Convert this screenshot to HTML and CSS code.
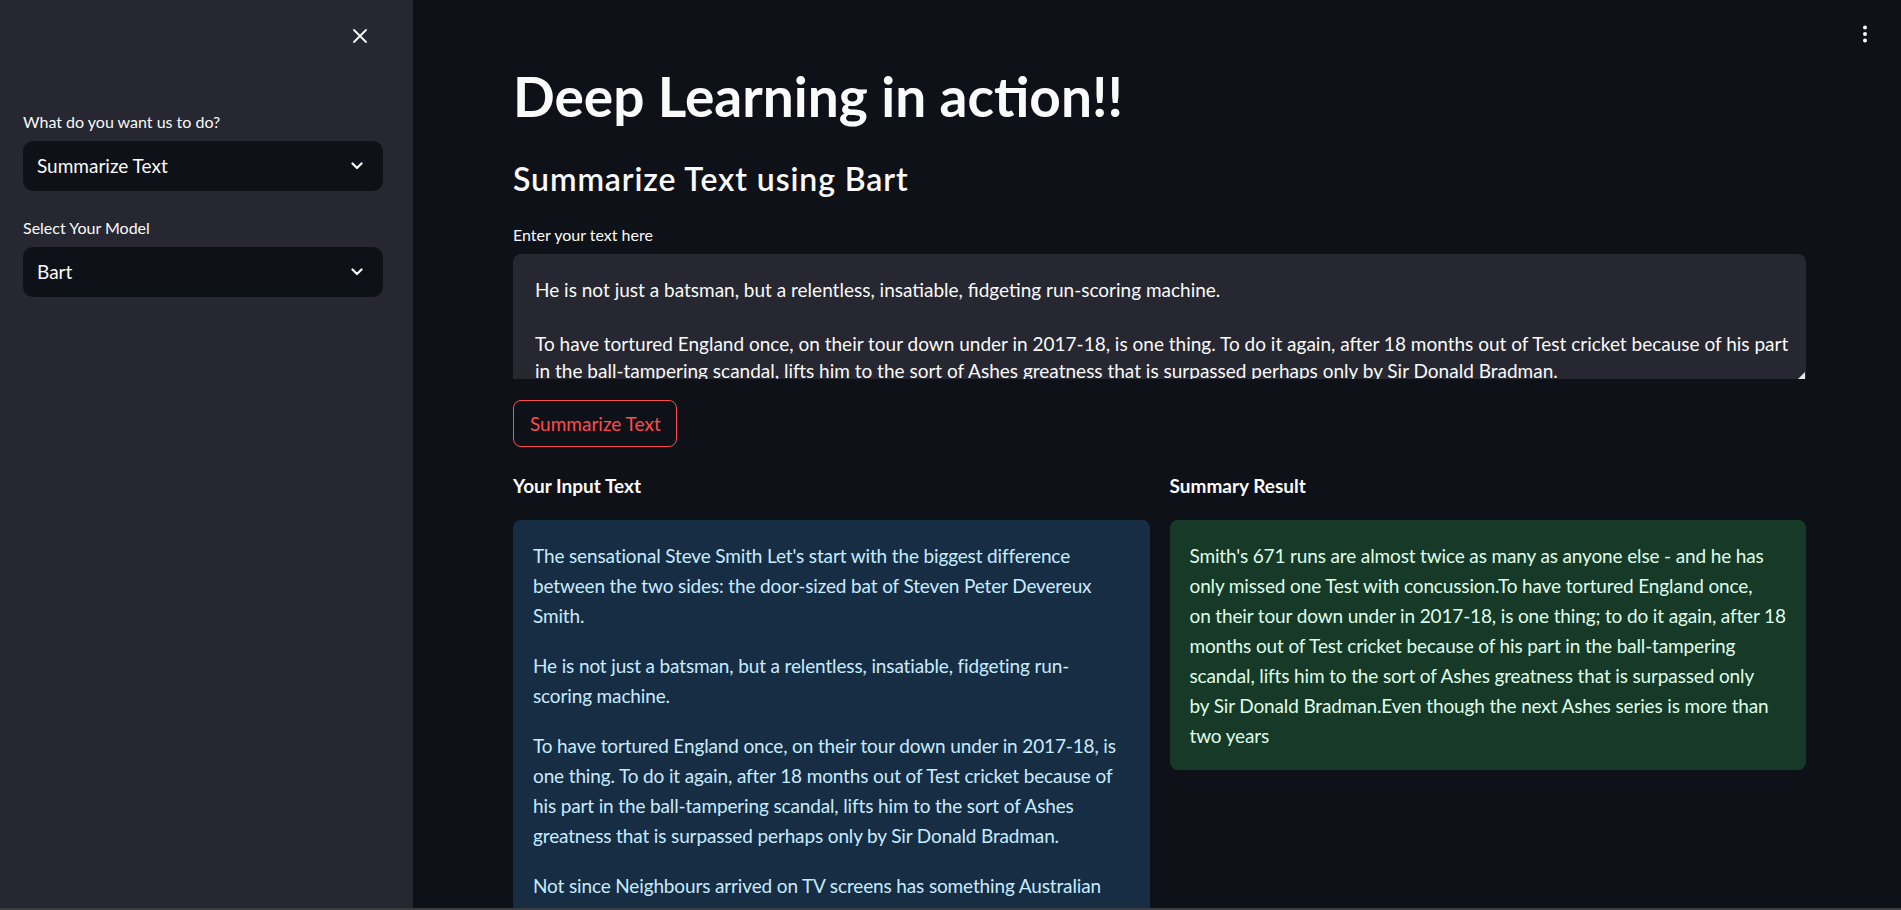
FILE: index.html
```html
<!DOCTYPE html>
<html lang="en">
<head>
<meta charset="utf-8">
<title>Deep Learning in action!!</title>
<link rel="stylesheet" href="styles.css">
</head>
<body>
<div class="app">
  <aside class="sidebar">
    <div class="sb-top">
      <button class="close-btn" aria-label="Close sidebar">
        <svg width="14" height="14" viewBox="0 0 14 14"><path d="M1 1 L13 13 M13 1 L1 13" stroke="#fafafa" stroke-width="1.8" stroke-linecap="round"/></svg>
      </button>
    </div>
    <div class="field">
      <label class="sb-label">What do you want us to do?</label>
      <div class="select">
        <span>Summarize Text</span>
        <svg class="chev" width="12" height="8" viewBox="0 0 12 8"><path d="M1.5 1.5 L6 6 L10.5 1.5" fill="none" stroke="#fafafa" stroke-width="2.2" stroke-linecap="round" stroke-linejoin="round"/></svg>
      </div>
    </div>
    <div class="field field-2">
      <label class="sb-label">Select Your Model</label>
      <div class="select">
        <span>Bart</span>
        <svg class="chev" width="12" height="8" viewBox="0 0 12 8"><path d="M1.5 1.5 L6 6 L10.5 1.5" fill="none" stroke="#fafafa" stroke-width="2.2" stroke-linecap="round" stroke-linejoin="round"/></svg>
      </div>
    </div>
  </aside>
  <main class="main">
    <button class="menu-btn" aria-label="Main menu">
      <svg width="6" height="18" viewBox="0 0 6 18"><circle cx="3" cy="2.5" r="2" fill="#fafafa"/><circle cx="3" cy="9" r="2" fill="#fafafa"/><circle cx="3" cy="15.5" r="2" fill="#fafafa"/></svg>
    </button>
    <h1 class="title">Deep Learning in action!!</h1>
    <h2 class="subtitle">Summarize Text using Bart</h2>
    <label class="label">Enter your text here</label>
    <div class="textarea">
      <div class="ta-line">He is not just a batsman, but a relentless, insatiable, fidgeting run-scoring machine.</div>
      <div class="ta-line">&nbsp;</div>
      <div class="ta-line">To have tortured England once, on their tour down under in 2017-18, is one thing. To do it again, after 18 months out of Test cricket because of his part</div>
      <div class="ta-line">in the ball-tampering scandal, lifts him to the sort of Ashes greatness that is surpassed perhaps only by Sir Donald Bradman.</div>
      <span class="resize-handle"></span>
    </div>
    <div class="btn-row">
      <button class="btn">Summarize Text</button>
    </div>
    <div class="cols">
      <section class="col">
        <h3 class="col-title">Your Input Text</h3>
        <div class="box box-info">
          <p>The sensational Steve Smith Let's start with the biggest difference<br>between the two sides: the door-sized bat of Steven Peter Devereux<br>Smith.</p>
          <p>He is not just a batsman, but a relentless, insatiable, fidgeting run-<br>scoring machine.</p>
          <p>To have tortured England once, on their tour down under in 2017-18, is<br>one thing. To do it again, after 18 months out of Test cricket because of<br>his part in the ball-tampering scandal, lifts him to the sort of Ashes<br>greatness that is surpassed perhaps only by Sir Donald Bradman.</p>
          <p>Not since Neighbours arrived on TV screens has something Australian<br>been so compulsively watchable in the United Kingdom.</p>
        </div>
      </section>
      <section class="col">
        <h3 class="col-title">Summary Result</h3>
        <div class="box box-success">
          <p>Smith's 671 runs are almost twice as many as anyone else - and he has<br>only missed one Test with concussion.To have tortured England once,<br>on their tour down under in 2017-18, is one thing; to do it again, after 18<br>months out of Test cricket because of his part in the ball-tampering<br>scandal, lifts him to the sort of Ashes greatness that is surpassed only<br>by Sir Donald Bradman.Even though the next Ashes series is more than<br>two years</p>
        </div>
      </section>
    </div>
  </main>
</div>
<div class="bottom-line"></div>
</body>
</html>
```
FILE: styles.css
```css
* { box-sizing: border-box; }
html, body { margin: 0; padding: 0; }
body {
  background: #0e1117;
  color: #fafafa;
  font-family: Lato, "Noto Sans", sans-serif;
  width: 1901px;
  height: 910px;
  overflow: hidden;
}
.app {
  display: flex;
  height: 908px;
  overflow: hidden;
}
.bottom-line {
  height: 2px;
  background: #3c3d40;
}
.sidebar {
  width: 413px;
  flex: none;
  background: #262730;
  padding: 0 30px 0 23px;
}
.sb-top {
  height: 72px;
  display: flex;
  align-items: center;
  justify-content: flex-end;
  padding-right: 16px;
}
.close-btn, .menu-btn {
  background: none;
  border: 0;
  padding: 0;
  display: flex;
  cursor: pointer;
}
.field { margin-top: 39px; }
.field-2 { margin-top: 26px; }
.sb-label, .label {
  display: block;
  font-size: 16px;
  line-height: 22px;
  height: 22px;
  color: #fafafa;
}
.select {
  margin-top: 8px;
  height: 50px;
  border-radius: 10px;
  background: #0e1117;
  display: flex;
  align-items: center;
  justify-content: space-between;
  padding: 0 20px 0 14px;
  font-size: 19px;
  line-height: 50px;
}
.main {
  flex: 1;
  position: relative;
  padding: 63px 95px 0 100px;
  display: flex;
  flex-direction: column;
  min-width: 0;
}
.main > * { flex-shrink: 0; }
.menu-btn {
  position: absolute;
  top: 25px;
  right: 33px;
}
.title {
  margin: 0;
  font-size: 55px;
  line-height: 66px;
  font-weight: 700;
  white-space: nowrap;
}
.subtitle {
  margin: 32px 0 0;
  font-size: 32px;
  line-height: 36px;
  font-weight: 600;
  letter-spacing: 0.9px;
}
.label { margin-top: 27px; }
.textarea {
  position: relative;
  margin-top: 8px;
  height: 125px;
  background: #262730;
  border-radius: 8px 8px 0 0;
  padding: 22px 22px 0;
  overflow: hidden;
  font-size: 19px;
  line-height: 27px;
}
.ta-line { white-space: nowrap; }
.resize-handle {
  position: absolute;
  right: 1px;
  bottom: 0;
  width: 0;
  height: 0;
  border-left: 7px solid transparent;
  border-bottom: 7px solid #e6e6e6;
}
.btn-row { margin-top: 21px; display: flex; }
.btn {
  height: 47px;
  padding: 0 15px 0 16px;
  background: transparent;
  border: 1px solid #ff4b4b;
  border-radius: 8px;
  color: #ff4b4b;
  font-family: inherit;
  font-size: 19px;
}
.cols {
  margin-top: 27px;
  display: grid;
  grid-template-columns: minmax(0, 1fr) minmax(0, 1fr);
  gap: 20px;
}
.col-title {
  margin: 0;
  font-size: 19px;
  line-height: 24px;
  font-weight: 700;
}
.box {
  margin-top: 22px;
  border-radius: 8px;
  padding: 21px 20px 19px;
  font-size: 19px;
  line-height: 30px;
  letter-spacing: -0.14px;
}
.box p { margin: 0 0 20px; white-space: nowrap; }
.box p:last-child { margin-bottom: 0; }
.box-info {
  background: #172d43;
  color: #c7ebff;
}
.box-success {
  background: #173928;
  color: #dffde9;
}
```
